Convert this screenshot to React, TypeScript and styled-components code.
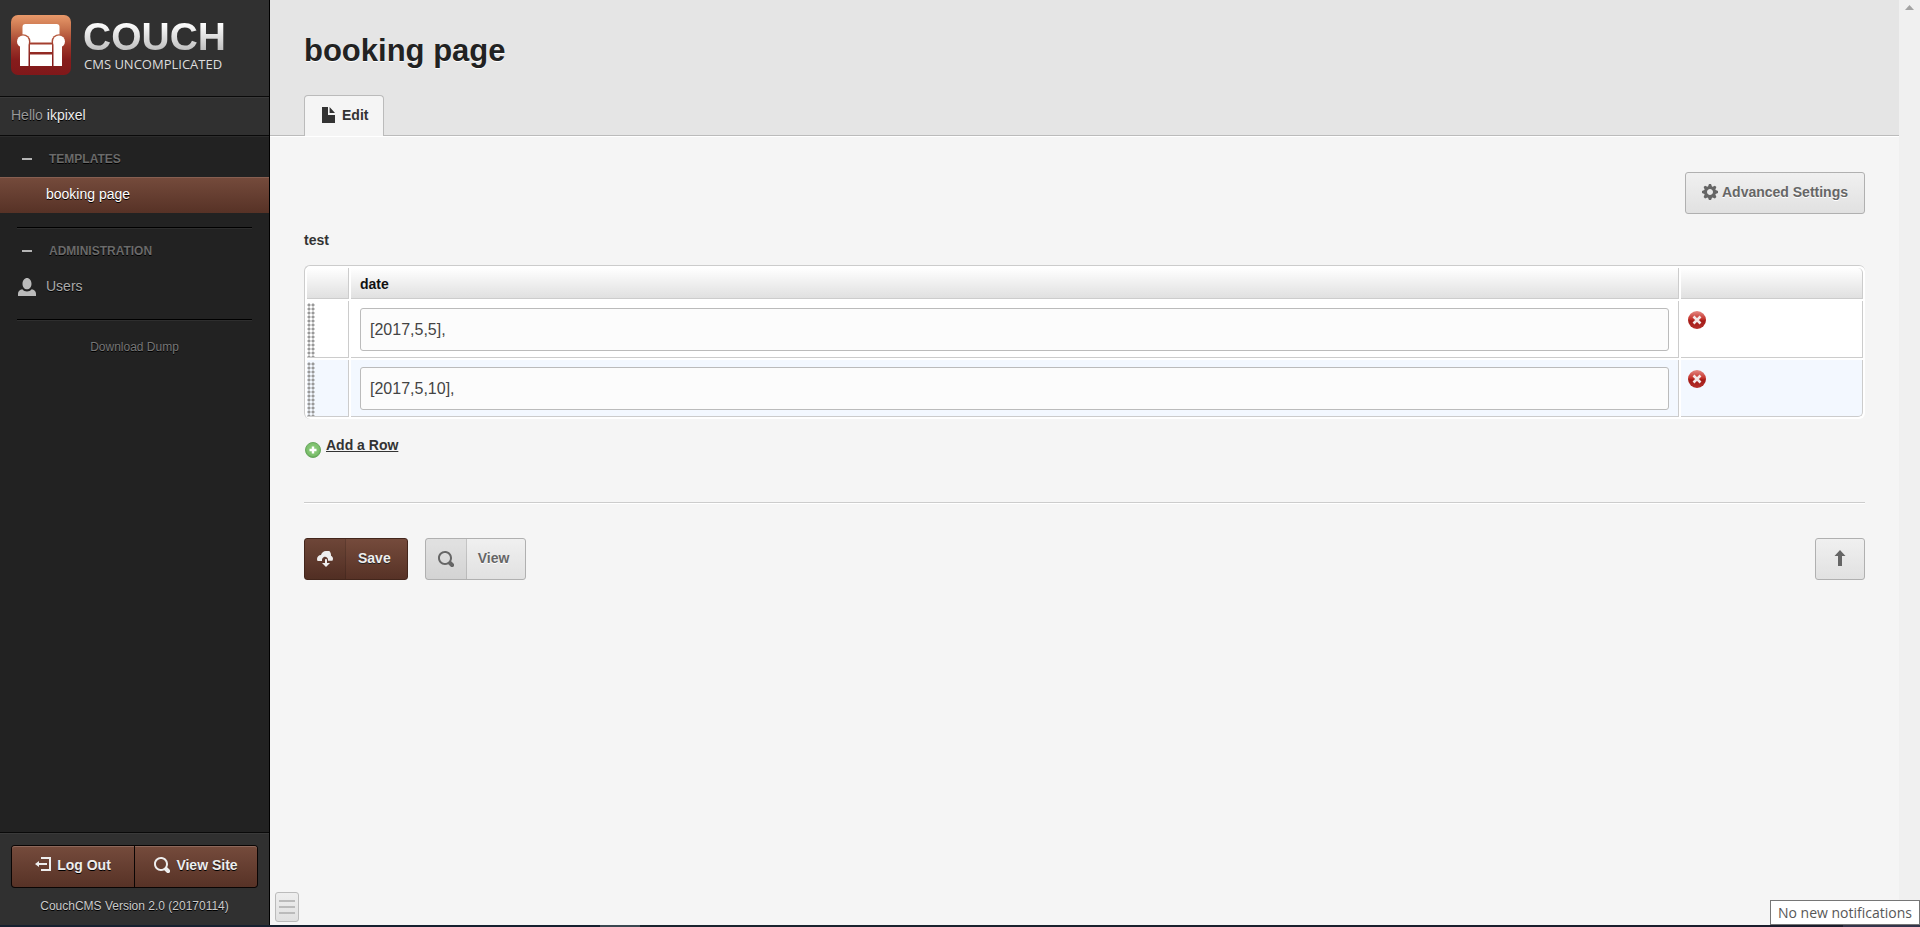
import React from "react";
import styled, { createGlobalStyle } from "styled-components";

const GlobalStyle = createGlobalStyle`
  *, *::before, *::after { box-sizing: border-box; }
  body {
    margin: 0;
    background: #f5f5f5;
    color: #333;
    font: 14px/20px "Liberation Sans", Arial, sans-serif;
  }
  button, input { font-family: inherit; }
  h1, p { margin: 0; padding: 0; }
`;

/* ---------- icons ---------- */

const shapes = {
  cog: "M3.5 0l-.5 1.19c-.1.03-.19.08-.28.13l-1.19-.5-.72.72.5 1.19c-.05.1-.09.18-.13.28l-1.19.5v1l1.19.5c.04.1.08.18.13.28l-.5 1.19.72.72 1.19-.5c.09.04.18.09.28.13l.5 1.19h1l.5-1.19c.09-.04.19-.08.28-.13l1.19.5.72-.72-.5-1.19c.04-.09.09-.19.13-.28l1.19-.5v-1l-1.19-.5c-.03-.09-.08-.19-.13-.28l.5-1.19-.72-.72-1.19.5c-.09-.04-.19-.09-.28-.13l-.5-1.19h-1zm.5 2.5c.83 0 1.5.67 1.5 1.5s-.67 1.5-1.5 1.5-1.5-.67-1.5-1.5.67-1.5 1.5-1.5z",
  logout: "M3 0v1h4v5h-4v1h5v-7h-5zm-1 2l-2 1.5 2 1.5v-1h4v-1h-4v-1z",
  search:
    "M3.5 0c-1.93 0-3.5 1.57-3.5 3.5s1.57 3.5 3.5 3.5c.59 0 1.17-.14 1.66-.41a1 1 0 0 0 .13.13l1 1a1.02 1.02 0 1 0 1.44-1.44l-1-1a1 1 0 0 0-.16-.13c.27-.49.44-1.06.44-1.66 0-1.93-1.55-3.5-3.5-3.5zm0 1c1.39 0 2.5 1.11 2.5 2.5 0 .66-.24 1.27-.66 1.72-.01.01-.02.02-.03.03a1 1 0 0 0-.13.13c-.44.4-1.04.63-1.69.63-1.39 0-2.5-1.11-2.5-2.5s1.11-2.5 2.5-2.5z",
  cloud:
    "M4.5 0c-1.21 0-2.27.86-2.5 2-1.1 0-2 .9-2 2 0 .37.11.71.28 1h2.22v-.5c0-.65.42-1.29 1-1.5.16-.06.33-.09.5-.09.83 0 1.5.67 1.5 1.5v.5h2.2c.19-.3.3-.63.3-1 0-.65-.42-1.29-1-1.5v-.5c0-1.38-1.12-2.5-2.5-2.5zm-.16 4a.5.5 0 0 0-.34.5v1.5h-1.5l2 2 2-2h-1.5v-1.5a.5.5 0 0 0-.59-.5.5.5 0 0 0-.06 0z",
  person:
    "M4 0c-1.1 0-2 1.12-2 2.5s.9 2.5 2 2.5 2-1.12 2-2.5-.9-2.5-2-2.5zm-2.09 5c-1.06.05-1.91.92-1.91 2v1h8v-1c0-1.08-.84-1.95-1.91-2-.54.61-1.28 1-2.09 1-.81 0-1.55-.39-2.09-1z",
  file: "M0 0v8h6.5v-4h-3.5v-4h-3zm3.8 0v3h2.7l-2.7-3z",
  up: "M4 0l2.75 3h-1.75v5h-2v-5h-1.75z",
};

const Glyph = styled.svg`
  flex: none;
  display: block;
  fill: currentColor;
`;

function Icon({ name, size = 16 }: { name: keyof typeof shapes; size?: number }) {
  return (
    <Glyph width={size} height={size} viewBox="0 0 8 8" aria-hidden="true">
      <path d={shapes[name]} />
    </Glyph>
  );
}

function CouchMark() {
  return (
    <Glyph width="60" height="60" viewBox="0 0 60 60" aria-hidden="true">
      <defs>
        <linearGradient id="mark" x1="0" y1="0" x2="0" y2="60" gradientUnits="userSpaceOnUse">
          <stop offset="0" stopColor="#e8996a" />
          <stop offset=".22" stopColor="#c9744e" />
          <stop offset=".5" stopColor="#a03a2c" />
          <stop offset=".75" stopColor="#861c1c" />
          <stop offset="1" stopColor="#80181a" />
        </linearGradient>
      </defs>
      <rect width="60" height="60" rx="7" fill="url(#mark)" />
      <rect x="11.500" y="9" width="37" height="18.500" rx="3" fill="#fff" />
      <g fill="url(#mark)">
        <circle cx="12" cy="26.600" r="7.400" />
        <circle cx="48" cy="26.600" r="7.400" />
      </g>
      <g fill="#fff">
        <circle cx="12" cy="26.600" r="6" />
        <circle cx="48" cy="26.600" r="6" />
        <rect x="9" y="27" width="8.500" height="24" />
        <rect x="42.500" y="27" width="8.500" height="24" />
        <rect x="19" y="29.500" width="22" height="7.500" />
        <rect x="19" y="39.500" width="22" height="11.500" />
      </g>
    </Glyph>
  );
}

function DeleteMark() {
  return (
    <Glyph width="18" height="18" viewBox="0 0 18 18" aria-hidden="true">
      <defs>
        <linearGradient id="del" x1="0" y1="0" x2="0" y2="1">
          <stop offset="0" stopColor="#e58a84" />
          <stop offset=".45" stopColor="#c4322b" />
          <stop offset=".55" stopColor="#a31b17" />
          <stop offset="1" stopColor="#b5302c" />
        </linearGradient>
      </defs>
      <circle cx="9" cy="9" r="9" fill="url(#del)" />
      <path d="M5.500 5.500l7 7M12.500 5.500l-7 7" stroke="#f3e8e8" strokeWidth="2.600" />
    </Glyph>
  );
}

function AddMark() {
  return (
    <Glyph width="16" height="16" viewBox="0 0 16 16" aria-hidden="true">
      <defs>
        <radialGradient id="add" cx=".5" cy=".45" r=".6">
          <stop offset="0" stopColor="#8fd07f" />
          <stop offset=".7" stopColor="#7cbf6c" />
          <stop offset="1" stopColor="#4f9a45" />
        </radialGradient>
      </defs>
      <circle cx="8" cy="8" r="7.500" fill="url(#add)" stroke="#6aa860" />
      <path d="M8 4.500v7M4.500 8h7" stroke="#fff" strokeWidth="2.400" />
    </Glyph>
  );
}

/* ---------- frame ---------- */

const Screen = styled.div`
  display: flex;
  flex-direction: column;
  min-height: 100vh;
`;

const Body = styled.div`
  display: grid;
  grid-template-columns: 270px 1fr 21px;
  flex: 1;
`;

const Taskbar = styled.div`
  height: 2px;
  background: linear-gradient(90deg, #16202f 600px, #3a4750 600px 640px, #1a242e 640px, #1a1c2c 96%, #33344a 96%);
`;

const ScrollTrack = styled.div`
  background: #f0f0f0;
  display: flex;
  justify-content: center;
  align-items: flex-start;
  padding-top: 5px;
  color: #a3a3a3;
`;

/* ---------- sidebar ---------- */

const Sidebar = styled.aside`
  display: flex;
  flex-direction: column;
  background: #222;
  border-right: 1px solid #000;
  text-shadow: 0 1px 0 #000;
`;

const Brand = styled.a`
  display: flex;
  gap: 12px;
  height: 97px;
  padding: 15px 11px 0;
  background: #303030;
  border-bottom: 1px solid #0a0a0a;
  text-decoration: none;
  text-shadow: none;
`;

const BrandText = styled.span`
  display: flex;
  flex-direction: column;
  padding-top: 2px;
`;

const BrandName = styled.span`
  font-size: 39px;
  font-weight: 700;
  line-height: 39px;
  background: linear-gradient(#fff 15%, #bbb 90%);
  background-clip: text;
  -webkit-background-clip: text;
  color: transparent;
`;

const BrandLine = styled.span`
  padding-left: 1px;
  font: 500 13px/16px "Open Sans", "Noto Sans", sans-serif;
  color: #ddd;
`;

const Greeting = styled.p`
  height: 39px;
  padding: 7px 11px 0;
  background: #303030;
  border-top: 1px solid #3a3a3a;
  border-bottom: 1px solid #0a0a0a;
  color: #999;

  a { color: #eee; text-decoration: none; }
`;

const Nav = styled.nav`
  flex: 1;
  border-top: 1px solid #2c2c2c;
`;

const NavHeading = styled.button`
  display: flex;
  align-items: center;
  gap: 17px;
  width: 100%;
  height: 40px;
  padding: 3px 22px 0;
  border: 0;
  background: none;
  color: #6a6a6a;
  font-size: 12px;
  font-weight: 700;
  text-transform: uppercase;
  text-shadow: inherit;

  &::before {
    content: "";
    width: 10px;
    height: 2px;
    background: #b5b5b5;
  }
`;

const NavLink = styled.a<{ $active?: boolean }>`
  display: flex;
  align-items: center;
  gap: 10px;
  height: 36px;
  padding: 0 18px 2px ${(p) => (p.$active ? "46px" : "18px")};
  color: ${(p) => (p.$active ? "#fff" : "#aaa")};
  text-decoration: none;
  background: ${(p) => (p.$active ? "linear-gradient(#754b3c, #573226)" : "none")};
  box-shadow: ${(p) => (p.$active ? "inset 0 1px 0 #875f51" : "none")};
  svg { color: #bbb; margin-top: 1px; }
`;

const NavRule = styled.hr`
  margin: 14px 17px 0;
  border: 0;
  height: 2px;
  background: linear-gradient(#000 50%, #2e2e2e 50%);
`;

const DumpLink = styled.a`
  display: block;
  margin-top: 16px;
  color: #777;
  font-size: 12px;
  text-align: center;
  text-decoration: none;
`;

const SideFooter = styled.footer`
  height: 93px;
  padding: 12px 11px 0;
  background: #303030;
  border-top: 1px solid #0a0a0a;
  box-shadow: inset 0 1px 0 #3a3a3a;
  font-size: 12px;
  color: #ccc;
  text-align: center;
`;

const SideButtons = styled.div`
  display: grid;
  grid-template-columns: 1fr 1fr;
  gap: 1px;
  padding: 1px;
  margin-bottom: 8px;
  border-radius: 4px;
  background: #0a0504;
`;

const SideButton = styled.button`
  display: flex;
  align-items: center;
  justify-content: center;
  gap: 6px;
  height: 41px;
  padding: 0 0 4px;
  border: 0;
  background: linear-gradient(#754b3c, #573226);
  box-shadow: inset 0 1px 0 #8d685b;
  color: #eee;
  font-size: 14px;
  font-weight: 700;
  text-shadow: inherit;

  &:first-child { border-radius: 3px 0 0 3px; }
  &:last-child { border-radius: 0 3px 3px 0; }
`;

/* ---------- main area ---------- */

const Main = styled.main`
  display: flex;
  flex-direction: column;
  min-width: 0;
`;

const PageHeader = styled.header`
  display: flex;
  flex-direction: column;
  justify-content: space-between;
  height: 136px;
  padding: 31px 34px 0;
  background: #e5e5e5;
  border-bottom: 1px solid #bbb;
  box-shadow: 0 1px 0 #fff;
`;

const Title = styled.h1`
  font-size: 31px;
  line-height: 40px;
  color: #222;
  text-shadow: 0 1px 0 #fff;
`;

const Tab = styled.button`
  display: flex;
  align-items: center;
  align-self: flex-start;
  gap: 4px;
  height: 41px;
  margin-bottom: -1px;
  padding: 0 15px 2px 17px;
  border: 1px solid #bbb;
  border-bottom: 0;
  border-radius: 4px 4px 0 0;
  background: #f5f5f5;
  color: #333;
  font-size: 14px;
  font-weight: 700;
`;

const Content = styled.form`
  flex: 1;
  padding: 36px 34px 0;
`;

const TopActions = styled.div`
  display: flex;
  justify-content: flex-end;
  margin-bottom: 16px;
`;

const Button = styled.button<{ $primary?: boolean }>`
  display: flex;
  align-items: stretch;
  height: 42px;
  padding: 0;
  border: 1px solid ${(p) => (p.$primary ? "#43261c" : "#b0b0b0")};
  border-radius: 3px;
  background: ${(p) => (p.$primary ? "linear-gradient(#754b3c, #573226)" : "linear-gradient(#f0f0f0, #e1e1e1)")};
  color: ${(p) => (p.$primary ? "#eee" : "#666")};
  font-size: 14px;
  font-weight: 700;
  text-shadow: ${(p) => (p.$primary ? "0 1px 0 #222" : "0 1px 0 #fff")};
`;

const ButtonIcon = styled.span`
  display: flex;
  align-items: center;
  width: 41px;
  padding-left: 12px;
  border-right: 1px solid rgba(0, 0, 0, 0.12);
  background: rgba(0, 0, 0, 0.06);
`;

const ButtonText = styled.span<{ $left: number; $right: number }>`
  display: flex;
  align-items: center;
  gap: 4px;
  padding: 0 ${(p) => p.$right}px 3px ${(p) => p.$left}px;
`;

const FieldLabel = styled.div`
  margin-bottom: 15px;
  font-weight: 700;
`;

const TableFrame = styled.div`
  border: solid #ccc;
  border-width: 1px 0 0 1px;
  border-radius: 6px;
  background: #fff;
`;

const Table = styled.table`
  width: 100%;
  table-layout: fixed;
  border-collapse: separate;
  border-spacing: 2px;
`;

const HeadCell = styled.th<{ $w?: number }>`
  width: ${(p) => (p.$w ? `${p.$w}px` : "auto")};
  height: 31px;
  padding: 2px 9px 0;
  border: solid #ccc;
  border-width: 0 1px 1px 0;
  background: linear-gradient(#fff, #e0e0e0);
  color: #111;
  text-align: left;
  &:last-child { border-top-right-radius: 5px; }
`;

const Row = styled.tr<{ $tint?: boolean }>`
  td { background-color: ${(p) => (p.$tint ? "#f3f8ff" : "#fff")}; }
  &:last-child td:last-child { border-bottom-right-radius: 5px; }
`;

const Cell = styled.td`
  height: 57px;
  padding: 7px 9px 6px;
  border: solid #ccc;
  border-width: 0 1px 1px 0;
  vertical-align: top;
`;

const GripCell = styled(Cell)`
  padding: 2px 0 0;
`;

const Grip = styled.div`
  width: 8px;
  height: 54px;
  background: radial-gradient(circle at 50% 50%, #999 1px, transparent 2px) 0 0 / 4px 4px;
  cursor: move;
`;

const ActionCell = styled(Cell)`
  padding: 10px 7px 0;
`;

const TextInput = styled.input`
  display: block;
  width: 100%;
  height: 43px;
  padding: 0 9px;
  border: 1px solid #bbb;
  border-radius: 3px;
  background: #fcfcfc;
  color: #444;
  font-size: 16px;
`;

const PlainButton = styled.button`
  display: block;
  padding: 0;
  border: 0;
  background: none;
`;

const AddRow = styled.a`
  display: flex;
  align-items: flex-start;
  gap: 5px;
  width: max-content;
  margin: 16px 0 0 1px;
  color: #333;
  font-weight: 700;
  svg { margin-top: 7px; }
`;

const Rule = styled.hr`
  height: 2px;
  margin: 44px 0 34px;
  border: 0;
  background: linear-gradient(#ccc 50%, #fff 50%);
`;

const BottomActions = styled.div`
  display: flex;
  gap: 17px;
  > :last-child { margin-left: auto; }
`;

const MenuToggle = styled.button`
  display: flex;
  flex-direction: column;
  justify-content: center;
  gap: 4px;
  width: 24px;
  height: 30px;
  margin: 0 0 3px 5px;
  padding: 0 3px;
  border: 1px solid #bbb;
  border-radius: 3px;
  background: linear-gradient(#eee, #e0e0e0);

  span { height: 2px; background: #bbb; }
`;

const Notice = styled.div`
  position: fixed;
  right: 0;
  bottom: 2px;
  height: 25px;
  padding: 0 7px;
  border: 1px solid #767676;
  background: #fff;
  color: #575757;
  font: 14px/23px "Open Sans", "Noto Sans", sans-serif;
  white-space: nowrap;
`;

const dates = ["[2017,5,5],", "[2017,5,10],"];

export default function App() {
  return (
    <Screen>
      <GlobalStyle />
      <Body>
        <Sidebar>
          <Brand href="#">
            <CouchMark />
            <BrandText>
              <BrandName>COUCH</BrandName>
              <BrandLine>CMS UNCOMPLICATED</BrandLine>
            </BrandText>
          </Brand>
          <Greeting>
            Hello <a href="#">ikpixel</a>
          </Greeting>
          <Nav>
            <NavHeading type="button">Templates</NavHeading>
            <NavLink href="#" $active>booking page</NavLink>
            <NavRule />
            <NavHeading type="button">Administration</NavHeading>
            <NavLink href="#">
              <Icon name="person" size={18} />
              Users
            </NavLink>
            <NavRule />
            <DumpLink href="#">Download Dump</DumpLink>
          </Nav>
          <SideFooter>
            <SideButtons>
              <SideButton type="button">
                <Icon name="logout" />
                Log Out
              </SideButton>
              <SideButton type="button">
                <Icon name="search" />
                View Site
              </SideButton>
            </SideButtons>
            CouchCMS Version 2.0 (20170114)
          </SideFooter>
        </Sidebar>
        <Main>
          <PageHeader>
            <Title>booking page</Title>
            <Tab type="button">
              <Icon name="file" />
              Edit
            </Tab>
          </PageHeader>
          <Content onSubmit={(e) => e.preventDefault()}>
            <TopActions>
              <Button type="button">
                <ButtonText $left={16} $right={16}>
                  <Icon name="cog" />
                  Advanced Settings
                </ButtonText>
              </Button>
            </TopActions>
            <FieldLabel id="field-test">test</FieldLabel>
            <TableFrame>
              <Table aria-labelledby="field-test">
                <thead>
                  <tr>
                    <HeadCell $w={42} />
                    <HeadCell id="col-date">date</HeadCell>
                    <HeadCell $w={182} />
                  </tr>
                </thead>
                <tbody>
                  {dates.map((value, i) => (
                    <Row key={value} $tint={i % 2 === 1}>
                      <GripCell>
                        <Grip />
                      </GripCell>
                      <Cell>
                        <TextInput type="text" defaultValue={value} aria-labelledby="col-date" />
                      </Cell>
                      <ActionCell>
                        <PlainButton type="button" aria-label="Delete row">
                          <DeleteMark />
                        </PlainButton>
                      </ActionCell>
                    </Row>
                  ))}
                </tbody>
              </Table>
            </TableFrame>
            <AddRow href="#">
              <AddMark />
              Add a Row
            </AddRow>
            <Rule />
            <BottomActions>
              <Button type="submit" $primary>
                <ButtonIcon>
                  <Icon name="cloud" />
                </ButtonIcon>
                <ButtonText $left={12} $right={16}>Save</ButtonText>
              </Button>
              <Button type="button">
                <ButtonIcon>
                  <Icon name="search" />
                </ButtonIcon>
                <ButtonText $left={11} $right={16}>View</ButtonText>
              </Button>
              <Button type="button" aria-label="Back to top">
                <ButtonText $left={16} $right={16}>
                  <Icon name="up" />
                </ButtonText>
              </Button>
            </BottomActions>
          </Content>
          <MenuToggle type="button" aria-label="Toggle menu">
            <span />
            <span />
            <span />
          </MenuToggle>
        </Main>
        <ScrollTrack aria-hidden="true">
          <Glyph width="9" height="5" viewBox="0 0 9 5">
            <path d="M4.500 0L9 5H0z" />
          </Glyph>
        </ScrollTrack>
      </Body>
      <Taskbar />
      <Notice role="status">No new notifications</Notice>
    </Screen>
  );
}
